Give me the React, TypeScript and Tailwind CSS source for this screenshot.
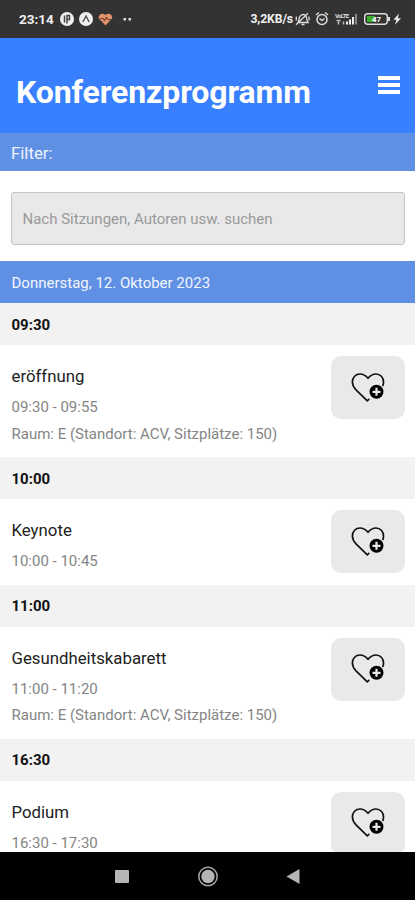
interface Session {
    start: string;
    title: string;
    time: string;
    room?: string;
}

const sessions: Session[] = [
    { start: '09:30', title: 'eröffnung', time: '09:30 - 09:55', room: 'Raum: E (Standort: ACV, Sitzplätze: 150)' },
    { start: '10:00', title: 'Keynote', time: '10:00 - 10:45' },
    { start: '11:00', title: 'Gesundheitskabarett', time: '11:00 - 11:20', room: 'Raum: E (Standort: ACV, Sitzplätze: 150)' },
    { start: '16:30', title: 'Podium', time: '16:30 - 17:30' },
];

function HeartPlusIcon() {
    return (
        <svg width="34" height="30" viewBox="0 0 34 30" fill="none">
            <path
                d="M17.8 26.3L16.3 27.8L5 16.8C2.6 14.4 1.4 11.8 1.4 9C1.4 4.3 4.7 1 9 1C12.5 1 14.8 2.6 17 5.3C19.2 2.6 21.5 1 25 1C29.3 1 32.5 4.3 32.5 9C32.5 10.3 32.3 11.4 31.9 12.4"
                stroke="#111"
                strokeWidth="1.7"
                strokeLinecap="round"
                strokeLinejoin="round"
            />
            <circle cx="25.5" cy="18.8" r="7" fill="#000" />
            <path d="M25.5 14.8v8M21.5 18.8h8" stroke="#e9e9e9" strokeWidth="2.2" />
        </svg>
    );
}

function StatusBar() {
    return (
        <div className="flex h-[38px] shrink-0 items-center bg-[#333] pr-[12px] pl-[19px] text-[#f0f0f0]">
            <span className="w-[41px] text-[13.5px] font-bold whitespace-nowrap">23:14</span>
            <svg width="76" height="16" viewBox="0 0 76 16" fill="none">
                <circle cx="7" cy="8" r="7" fill="#f0f0f0" />
                <path d="M7 12.5V4.5h2.5v4H7M4.5 4.5v7" stroke="#444" strokeWidth="1.5" />
                <circle cx="26" cy="8" r="7" fill="#f0f0f0" />
                <path d="M22.8 11l3.2-6 3.2 6" stroke="#555" strokeWidth="1.5" />
                <path d="M45.5 14.5L39.6 8.3C36.8 5 41.5.3 45.5 4c4-3.7 8.7 1 5.9 4.3z" fill="#e0926a" />
                <path d="M40 7.5h3l1.5 2 2-3 1.5 2h3" stroke="#754331" strokeWidth="1.2" />
                <rect x="63.5" y="7" width="2.5" height="2.5" fill="#ddd" />
                <rect x="68.5" y="7" width="2.5" height="2.5" fill="#ddd" />
            </svg>
            <span className="ml-auto text-[12.2px] font-bold tracking-[-0.1px] whitespace-nowrap">3,2KB/s</span>
            <svg className="ml-[2px] shrink-0" width="108" height="16" viewBox="0 0 108 16" fill="none">
                {/* muted bell */}
                <path d="M3 11.5c1.5-2 0-5 3-7.3 2-1.2 4-.5 5 .8 1.2 2 .2 4.5 2 6.5zM6.5 13.5h3M1 13.8L13 2.3M1.3 5.5v4M14 5.5v4" stroke="#ddd" strokeWidth="1.3" />
                {/* alarm */}
                <circle cx="27" cy="8.5" r="5" stroke="#ddd" strokeWidth="1.5" />
                <path d="M21 4l3-2.5M33 4l-3-2.5M24.5 7.5l2.5 2 2.5-2" stroke="#ddd" strokeWidth="1.4" />
                {/* network */}
                <text x="40" y="7" fill="#ddd" fontSize="6" fontWeight="700" textLength="14">VoLTE</text>
                <path d="M43.5 9.5v4M41.5 9.5h4M48.5 13.5v-3" stroke="#bbb" strokeWidth="1.5" />
                <path d="M52 13.5v-3M55 13.5V8.5M58 13.5V6" stroke="#eee" strokeWidth="2" />
                <path d="M61 13.5V3" stroke="#888" strokeWidth="2" />
                {/* battery */}
                <rect x="69.7" y="2.7" width="22.6" height="10.6" rx="3" stroke="#ddd" strokeWidth="1.4" />
                <path d="M94 6v4" stroke="#ddd" strokeWidth="2" />
                <rect x="72" y="5" width="8" height="6" fill="#3fae2a" />
                <text x="77" y="11" fill="#fff" fontSize="8" fontWeight="700">47</text>
                <path d="M104 2.5l-5.5 6.3h3L100 13.8l6-6.6h-3.2z" fill="#eee" />
            </svg>
        </div>
    );
}

function SessionRow({ session }: { session: Session }) {
    return (
        <section className="shrink-0">
            <h2 className="flex h-[42px] items-center bg-[#f2f2f2] pt-px pl-[11.5px] text-[15px] leading-5 font-bold text-[#111]">
                {session.start}
            </h2>
            <div className="flex items-start justify-between bg-white pr-[10px] pb-[10px] pl-[11.5px]">
                <div className="pt-4 text-[15px] leading-[26.5px] text-[#858585]">
                    <h3 className="mb-[3px] text-[16.8px] leading-[30px] text-[#222]">{session.title}</h3>
                    <p>{session.time}</p>
                    {session.room && <p>{session.room}</p>}
                </div>
                <button className="mt-[11px] flex h-[63px] w-[74px] items-center justify-center rounded-[10px] bg-[#e9e9e9]">
                    <HeartPlusIcon />
                </button>
            </div>
        </section>
    );
}

export default function App() {
    return (
        <div className="flex h-[900px] w-[415px] flex-col overflow-hidden bg-white font-[Roboto,sans-serif]">
            <StatusBar />

            <header className="flex h-[95px] shrink-0 items-start justify-between bg-[#3880ff] pr-[15px] pl-4 text-white">
                <h1 className="mt-[34px] text-[32px] leading-10 font-bold tracking-[-0.1px]">Konferenzprogramm</h1>
                <button className="mt-[38px] flex w-[22px] flex-col gap-[3px]">
                    <span className="h-1 w-full bg-white" />
                    <span className="h-1 w-full bg-white" />
                    <span className="h-1 w-full bg-white" />
                </button>
            </header>

            <div className="flex h-[38px] shrink-0 items-center bg-[#6090e4] pt-px pl-[11px] text-[16.8px] leading-6 text-[#eef3fd]">
                Filter:
            </div>

            <div className="shrink-0 px-[10.5px] pt-[21px] pb-4">
                <input
                    className="block h-[53px] w-full rounded-[3px] border border-[#c4c4c4] bg-[#e9e9e9] px-[11px] text-[15px] placeholder:text-[#999]"
                    placeholder="Nach Sitzungen, Autoren usw. suchen"
                />
            </div>

            <div className="flex h-[42px] shrink-0 items-center bg-[#6090e4] pt-px pl-[11.5px] text-[15px] leading-5 text-[#f2f6fe]">
                Donnerstag, 12. Oktober 2023
            </div>

            <main className="flex min-h-0 flex-1 flex-col overflow-hidden">
                {sessions.map((session) => (
                    <SessionRow key={session.start} session={session} />
                ))}
            </main>

            <nav className="flex h-12 shrink-0 items-center justify-center bg-black">
                <svg width="190" height="24" viewBox="0 0 190 24">
                    <rect x="2" y="6" width="14" height="13" rx="1" fill="#b5b5b5" />
                    <circle cx="95" cy="12.5" r="9.2" fill="none" stroke="#aaa" strokeWidth="1.5" />
                    <circle cx="95" cy="12.5" r="6.7" fill="#b5b5b5" />
                    <path d="M186.5 5v15L173.5 12.5z" fill="#b5b5b5" />
                </svg>
            </nav>
        </div>
    );
}
